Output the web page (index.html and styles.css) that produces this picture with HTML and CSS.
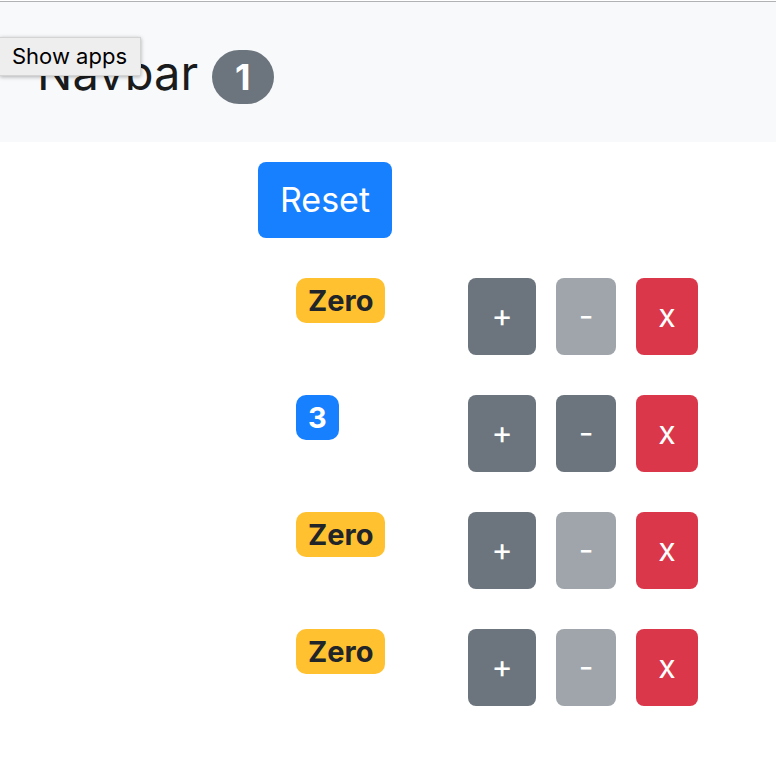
FILE: index.html
```html
<!DOCTYPE html>
<html lang="en">
<head>
<meta charset="utf-8">
<title>Counters</title>
<link rel="stylesheet" href="styles.css">
</head>
<body>
<nav class="navbar">
  <a class="brand" href="#">Navbar <span class="pill">1</span></a>
</nav>
<div class="tooltip" role="tooltip">Show apps</div>
<main class="container">
  <button class="btn reset" type="button">Reset</button>
  <div class="row">
    <div class="count"><span class="badge zero">Zero</span></div>
    <div class="actions">
      <button class="btn plus" type="button">+</button>
      <button class="btn minus" type="button" disabled>-</button>
      <button class="btn remove" type="button">x</button>
    </div>
  </div>
  <div class="row">
    <div class="count"><span class="badge">3</span></div>
    <div class="actions">
      <button class="btn plus" type="button">+</button>
      <button class="btn minus" type="button">-</button>
      <button class="btn remove" type="button">x</button>
    </div>
  </div>
  <div class="row">
    <div class="count"><span class="badge zero">Zero</span></div>
    <div class="actions">
      <button class="btn plus" type="button">+</button>
      <button class="btn minus" type="button" disabled>-</button>
      <button class="btn remove" type="button">x</button>
    </div>
  </div>
  <div class="row">
    <div class="count"><span class="badge zero">Zero</span></div>
    <div class="actions">
      <button class="btn plus" type="button">+</button>
      <button class="btn minus" type="button" disabled>-</button>
      <button class="btn remove" type="button">x</button>
    </div>
  </div>
</main>
</body>
</html>
```
FILE: styles.css
```css
* {
  box-sizing: border-box;
}

body {
  margin: 0;
  padding-top: 1px;
  background: #fff;
  color: #212529;
  font-family: Inter, Roboto, "Liberation Sans", sans-serif;
}

.navbar {
  padding: 41px 37px 38px;
  border-top: 1px solid #b0b2b4;
  background: #f8f9fb;
}

.brand {
  display: flex;
  align-items: baseline;
  gap: 14px;
  color: #1a1b1c;
  font-size: 47px;
  line-height: 60px;
  text-decoration: none;
}

.pill {
  padding: 0 23px;
  border-radius: 27px;
  background: #6c757d;
  color: #fff;
  font-size: 36px;
  font-weight: 700;
  line-height: 54px;
}

.tooltip {
  position: absolute;
  top: 37px;
  left: 0;
  padding: 0 13px 0 12px;
  border: 1px solid #d4d4d4;
  border-left: 0;
  background: #eee;
  box-shadow: 0 1px 4px rgba(0, 0, 0, 0.3);
  color: #000;
  font-size: 22px;
  line-height: 37px;
}

.container {
  padding: 20px 78px 20px 258px;
}

.btn {
  height: 77px;
  padding: 0 0 2px;
  border: 0;
  border-radius: 8px;
  color: #fff;
  font-family: inherit;
  font-size: 32px;
}

.reset {
  display: block;
  width: 134px;
  height: 76px;
  background: #1780ff;
  font-size: 34px;
}

.row {
  display: flex;
  justify-content: space-between;
  margin-top: 40px;
  padding-left: 38px;
}

.badge {
  display: block;
  padding: 0 12px;
  border-radius: 10px;
  background: #1780ff;
  color: #fff;
  font-size: 29px;
  font-weight: 700;
  line-height: 45px;
}

.zero {
  background: #ffc12f;
  color: #212529;
}

.actions {
  display: flex;
  gap: 20px;
}

.plus {
  width: 68px;
  background: #6c757d;
}

.minus {
  width: 60px;
  background: #6c757d;
}

.minus:disabled {
  background: #a0a5ab;
}

.remove {
  width: 62px;
  background: #db374a;
}
```
